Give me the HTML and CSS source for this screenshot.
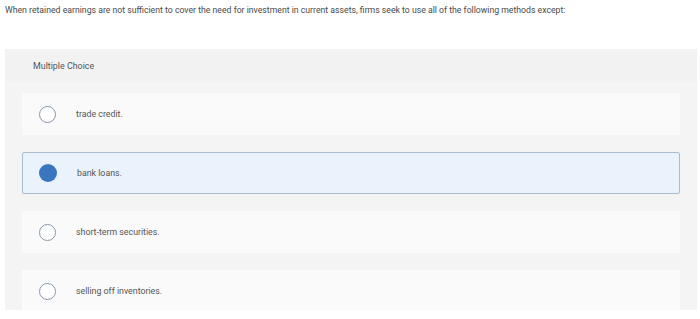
FILE: index.html
```html
<!doctype html>
<html>
<head>
    <meta charset="utf-8">
    <title>Multiple Choice</title>
    <link rel="stylesheet" href="styles.css">
</head>
<body>
    <p class="question">When retained earnings are not sufficient to cover the need for investment in current assets, firms seek to use all of the following methods except:</p>
    <div class="panel">
        <div class="panel-header">Multiple Choice</div>
        <div class="choices">
            <div class="choice">
                <span class="radio"></span>
                <span class="label">trade credit.</span>
            </div>
            <div class="choice selected">
                <span class="radio"></span>
                <span class="label">bank loans.</span>
            </div>
            <div class="choice">
                <span class="radio"></span>
                <span class="label">short-term securities.</span>
            </div>
            <div class="choice">
                <span class="radio"></span>
                <span class="label">selling off inventories.</span>
            </div>
        </div>
    </div>
</body>
</html>
```

FILE: styles.css
```css
body {
    font-family: Roboto, "Open Sans", sans-serif;
    background-color: #fff;
    color: #333;
    margin: 0;
    padding: 0;
}
.question {
    margin: 0;
    padding: 2px 5px 0 5px;
    font-size: 8.7px;
    line-height: 17px;
    color: #4a4a4a;
    white-space: nowrap;
}
.panel {
    margin: 30px 3px 0 5px;
    background-color: #f4f4f4;
    height: 261px;
    overflow: hidden;
}
.panel-header {
    height: 33px;
    display: flex;
    align-items: center;
    padding-left: 28px;
    font-size: 8.9px;
    color: #555;
    background-color: #f2f2f2;
}
.choices {
    display: flex;
    flex-direction: column;
    gap: 17px;
    padding: 11px 17px 0 17px;
}
.choice {
    height: 42px;
    display: flex;
    align-items: center;
    background-color: #fafafa;
    box-sizing: border-box;
    padding-left: 17px;
}
.choice.selected {
    background-color: #eaf2fc;
    border: 1px solid #a9bdd1;
    border-radius: 2px;
    padding-left: 16px;
}
.radio {
    width: 17px;
    height: 17px;
    box-sizing: border-box;
    border: 1.5px solid #8598ab;
    border-radius: 50%;
    background-color: #fff;
    flex-shrink: 0;
}
.selected .radio {
    width: 18px;
    height: 18px;
    border: none;
    background-color: #3a76bd;
}
.label {
    margin-left: 20px;
    font-size: 8.8px;
    color: #555;
}
```
